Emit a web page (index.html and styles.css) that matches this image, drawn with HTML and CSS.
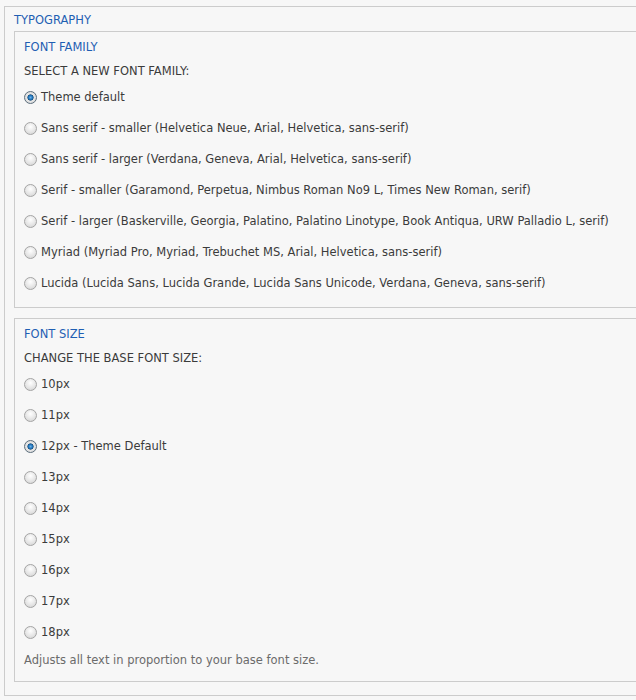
FILE: index.html
```html
<!DOCTYPE html>
<html lang="en">
<head>
    <meta charset="UTF-8">
    <title>Appearance settings</title>
    <link rel="stylesheet" href="styles.css">
</head>
<body>
    <div class="fieldset outer">
        <div class="legend">Typography</div>

        <div class="fieldset inner">
            <div class="legend">Font family</div>
            <div class="form-label">Select a new font family:</div>
            <label class="option"><input type="radio" name="family" checked> Theme default</label>
            <label class="option"><input type="radio" name="family"> Sans serif - smaller (Helvetica Neue, Arial, Helvetica, sans-serif)</label>
            <label class="option"><input type="radio" name="family"> Sans serif - larger (Verdana, Geneva, Arial, Helvetica, sans-serif)</label>
            <label class="option"><input type="radio" name="family"> Serif - smaller (Garamond, Perpetua, Nimbus Roman No9 L, Times New Roman, serif)</label>
            <label class="option"><input type="radio" name="family"> Serif - larger (Baskerville, Georgia, Palatino, Palatino Linotype, Book Antiqua, URW Palladio L, serif)</label>
            <label class="option"><input type="radio" name="family"> Myriad (Myriad Pro, Myriad, Trebuchet MS, Arial, Helvetica, sans-serif)</label>
            <label class="option"><input type="radio" name="family"> Lucida (Lucida Sans, Lucida Grande, Lucida Sans Unicode, Verdana, Geneva, sans-serif)</label>
        </div>

        <div class="fieldset inner">
            <div class="legend">Font size</div>
            <div class="form-label">Change the base font size:</div>
            <label class="option"><input type="radio" name="size"> 10px</label>
            <label class="option"><input type="radio" name="size"> 11px</label>
            <label class="option"><input type="radio" name="size" checked> 12px - Theme Default</label>
            <label class="option"><input type="radio" name="size"> 13px</label>
            <label class="option"><input type="radio" name="size"> 14px</label>
            <label class="option"><input type="radio" name="size"> 15px</label>
            <label class="option"><input type="radio" name="size"> 16px</label>
            <label class="option"><input type="radio" name="size"> 17px</label>
            <label class="option"><input type="radio" name="size"> 18px</label>
            <div class="description">Adjusts all text in proportion to your base font size.</div>
        </div>
    </div>
</body>
</html>
```

FILE: styles.css
```css
/* Page */
body {
    margin: 0;
    padding: 0;
    font-family: "DejaVu Sans", Verdana, sans-serif;
    font-size: 11.5px;
    color: #3b3b3b;
    background-color: #f7f7f7;
    overflow: hidden;
}

/* Fieldsets */
.fieldset {
    border: 1px solid #cccccc;
    border-right: none;
}

.outer {
    margin: 6px 0 0 4px;
    padding: 7px 0 13px 9px;
}

.inner {
    padding: 9px 0 9px 9px;
    margin-bottom: 10px;
}

.inner:last-child {
    margin-bottom: 0;
    padding-bottom: 14px;
}

.legend {
    color: #1f5fb3;
    text-transform: uppercase;
    line-height: 13px;
    margin-bottom: 11px;
}

.outer > .legend {
    margin-bottom: 4px;
}

.form-label {
    text-transform: uppercase;
    line-height: 13px;
    margin-bottom: 3px;
}

/* Radio options */
.option {
    display: flex;
    align-items: center;
    height: 31px;
}

.option input {
    appearance: none;
    width: 13px;
    height: 13px;
    margin: 2px 4px 0 0;
    border-radius: 50%;
    border: 1px solid #a4a4a4;
    background: radial-gradient(circle at 50% 35%, #ffffff 0%, #e6e6e6 55%, #cfcfcf 100%);
    box-sizing: border-box;
    flex-shrink: 0;
}

.option input:checked {
    border-color: #5c6e7c;
    background: radial-gradient(circle, #6ab0e8 0%, #1a6fb5 28%, #1c4f7a 36%, #e8e8e8 44%, #d0d0d0 100%);
}

.description {
    color: #6b6b6b;
    line-height: 13px;
    margin-top: 7px;
}
```
